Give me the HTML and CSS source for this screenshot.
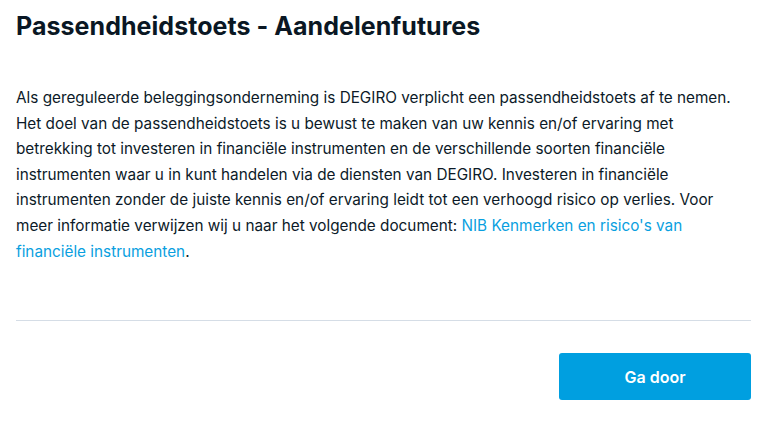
FILE: index.html
```html
<!DOCTYPE html>
<html lang="nl">
<head>
<meta charset="utf-8">
<link rel="stylesheet" href="styles.css">
</head>
<body>
<div class="dialog">
  <h1 class="title">Passendheidstoets - Aandelenfutures</h1>
  <p class="text">Als gereguleerde beleggingsonderneming is DEGIRO verplicht een passendheidstoets af te nemen.<br>Het doel van de passendheidstoets is u bewust te maken van uw kennis en/of ervaring met<br>betrekking tot investeren in financiële instrumenten en de verschillende soorten financiële<br>instrumenten waar u in kunt handelen via de diensten van DEGIRO. Investeren in financiële<br>instrumenten zonder de juiste kennis en/of ervaring leidt tot een verhoogd risico op verlies. Voor<br>meer informatie verwijzen wij u naar het volgende document: <a class="link" href="#">NIB Kenmerken en risico's van<br>financiële instrumenten</a>.</p>
  <div class="divider"></div>
  <div class="actions">
    <button class="btn">Ga door</button>
  </div>
</div>
</body>
</html>
```
FILE: styles.css
```css
html, body {
  margin: 0;
  padding: 0;
  background: #ffffff;
}
body {
  font-family: Inter, "Noto Sans", sans-serif;
  color: #0c1a28;
}
.dialog {
  padding: 10px 16px 0 16px;
}
.title {
  margin: 0;
  font-size: 25px;
  line-height: 32px;
  font-weight: 700;
  color: #0a1724;
  letter-spacing: 0.05px;
}
.text {
  margin: 43px 0 0 0;
  font-size: 15.3px;
  line-height: 25.6px;
  white-space: nowrap;
}
.link {
  color: #0a9fdf;
  text-decoration: none;
}
.divider {
  margin-top: 56px;
  height: 1px;
  background: #d5dde6;
}
.actions {
  display: flex;
  justify-content: flex-end;
  margin-top: 32px;
}
.btn {
  width: 192px;
  height: 47px;
  border: 0;
  border-radius: 3px;
  background: #009fe0;
  color: #ffffff;
  font-family: Inter, "Noto Sans", sans-serif;
  font-size: 16px;
  font-weight: 600;
  cursor: pointer;
}
```
